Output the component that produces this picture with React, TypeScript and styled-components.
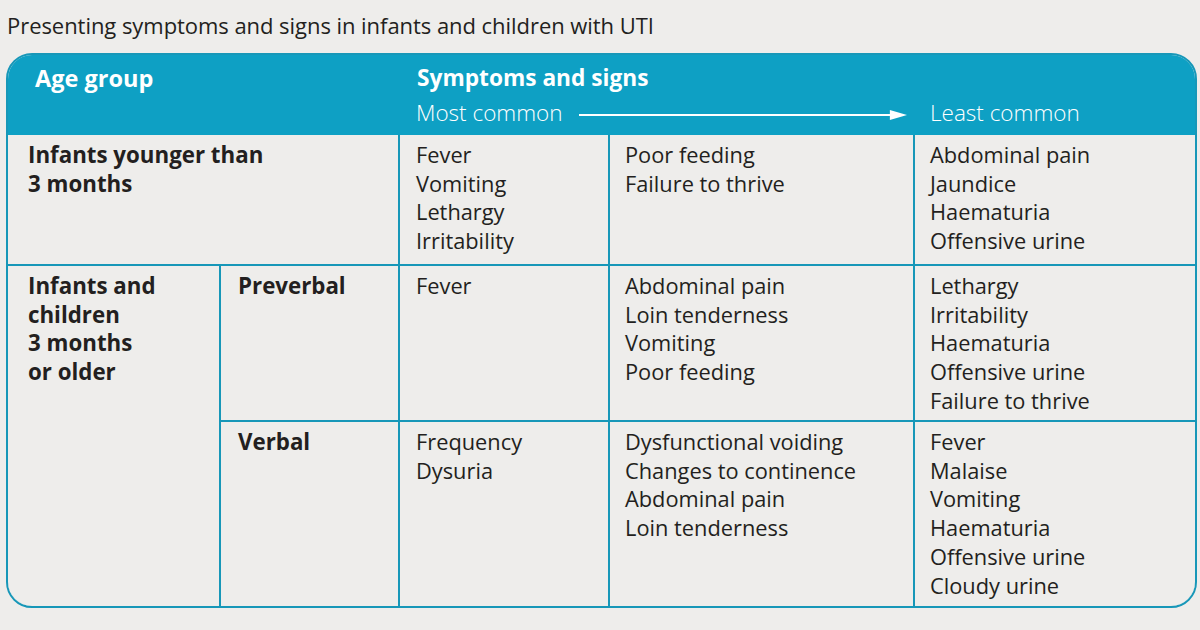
import React from "react";
import styled, { createGlobalStyle } from "styled-components";

const TEAL = "#1797b8";
const HEAD = "#0ea0c4";
const INK = "#231f20";

const Global = createGlobalStyle`
  html, body { margin: 0; padding: 0; background: #eeedeb; }
  body { font-family: "Open Sans", "Liberation Sans", sans-serif; color: ${INK}; }
`;

const Page = styled.div`
  width: 1200px;
  height: 630px;
  box-sizing: border-box;
  padding: 12px 3px 0 6px;
  background: #eeedeb;
`;

const Title = styled.h1`
  margin: 0 0 0 1px;
  font-size: 22px;
  line-height: 26px;
  font-weight: 400;
  letter-spacing: -0.05px;
  color: ${INK};
`;

const Table = styled.div`
  margin-top: 15px;
  width: 1191px;
  box-sizing: border-box;
  border: 2px solid ${TEAL};
  border-radius: 26px;
  overflow: hidden;
`;

const cols = "211px 177px 208px 303px 280px";

const Header = styled.div`
  display: grid;
  grid-template-columns: ${cols};
  column-gap: 2px;
  grid-template-rows: 44px 36px;
  background: ${HEAD};
  color: #fff;
`;

const HeadBold = styled.div<{ $span: number; $pad: number; $size: number }>`
  grid-column: span ${(p) => p.$span};
  padding-left: ${(p) => p.$pad}px;
  font-weight: 700;
  font-size: ${(p) => p.$size}px;
  line-height: 26px;
  padding-top: 10px;
  white-space: nowrap;
`;

const HeadLight = styled.div<{ $span: number; $pad: number }>`
  grid-column: span ${(p) => p.$span};
  padding: 0 0 8px ${(p) => p.$pad}px;
  font-weight: 300;
  font-size: 22.5px;
  line-height: 26px;
  display: flex;
  align-items: center;
  white-space: nowrap;
`;

const Arrow = styled.svg`
  flex: 1;
  height: 12px;
  margin: 4px 6px 0 16px;
`;

const Body = styled.div`
  display: grid;
  grid-template-columns: ${cols};
  grid-template-rows: 129px 154px 184px;
  gap: 2px;
  background: ${TEAL};
`;

const Cell = styled.div<{ $col?: string; $row?: string; $pad?: number; $bold?: boolean }>`
  background: #eeedeb;
  grid-column: ${(p) => p.$col || "auto"};
  grid-row: ${(p) => p.$row || "auto"};
  padding: 6px 0 0 ${(p) => p.$pad ?? 16}px;
  font-size: ${(p) => (p.$bold ? 22.3 : 21.8)}px;
  line-height: 28.7px;
  font-weight: ${(p) => (p.$bold ? 700 : 400)};
`;

const Line = styled.div`
  white-space: nowrap;
`;

const L = ({ items }: { items: string[] }) => (
  <>
    {items.map((t) => (
      <Line key={t}>{t}</Line>
    ))}
  </>
);

export default function App() {
  return (
    <Page>
      <Global />
      <Title>Presenting symptoms and signs in infants and children with UTI</Title>
      <Table>
        <Header>
          <HeadBold $span={2} $pad={27} $size={23.5}>Age group</HeadBold>
          <HeadBold $span={3} $pad={17} $size={22.7}>Symptoms and signs</HeadBold>
          <HeadLight $span={2} $pad={0} />
          <HeadLight $span={2} $pad={16}>
            Most common
            <Arrow viewBox="0 0 300 12" preserveAspectRatio="none">
              <line x1="0" y1="6" x2="290" y2="6" stroke="#fff" strokeWidth="2" />
              <polygon points="284,1 300,6 284,11" fill="#fff" />
            </Arrow>
          </HeadLight>
          <HeadLight $span={1} $pad={15}>Least common</HeadLight>
        </Header>
        <Body>
          <Cell $col="1 / span 2" $pad={20} $bold>
            <L items={["Infants younger than", "3 months"]} />
          </Cell>
          <Cell>
            <L items={["Fever", "Vomiting", "Lethargy", "Irritability"]} />
          </Cell>
          <Cell $pad={15}>
            <L items={["Poor feeding", "Failure to thrive"]} />
          </Cell>
          <Cell $pad={15}>
            <L items={["Abdominal pain", "Jaundice", "Haematuria", "Offensive urine"]} />
          </Cell>

          <Cell $col="1" $row="2 / span 2" $pad={20} $bold>
            <L items={["Infants and", "children", "3 months", "or older"]} />
          </Cell>
          <Cell $pad={17} $bold>
            <L items={["Preverbal"]} />
          </Cell>
          <Cell>
            <L items={["Fever"]} />
          </Cell>
          <Cell $pad={15}>
            <L items={["Abdominal pain", "Loin tenderness", "Vomiting", "Poor feeding"]} />
          </Cell>
          <Cell $pad={15}>
            <L items={["Lethargy", "Irritability", "Haematuria", "Offensive urine", "Failure to thrive"]} />
          </Cell>

          <Cell $pad={17} $bold>
            <L items={["Verbal"]} />
          </Cell>
          <Cell>
            <L items={["Frequency", "Dysuria"]} />
          </Cell>
          <Cell $pad={15}>
            <L items={["Dysfunctional voiding", "Changes to continence", "Abdominal pain", "Loin tenderness"]} />
          </Cell>
          <Cell $pad={15}>
            <L items={["Fever", "Malaise", "Vomiting", "Haematuria", "Offensive urine", "Cloudy urine"]} />
          </Cell>
        </Body>
      </Table>
    </Page>
  );
}
